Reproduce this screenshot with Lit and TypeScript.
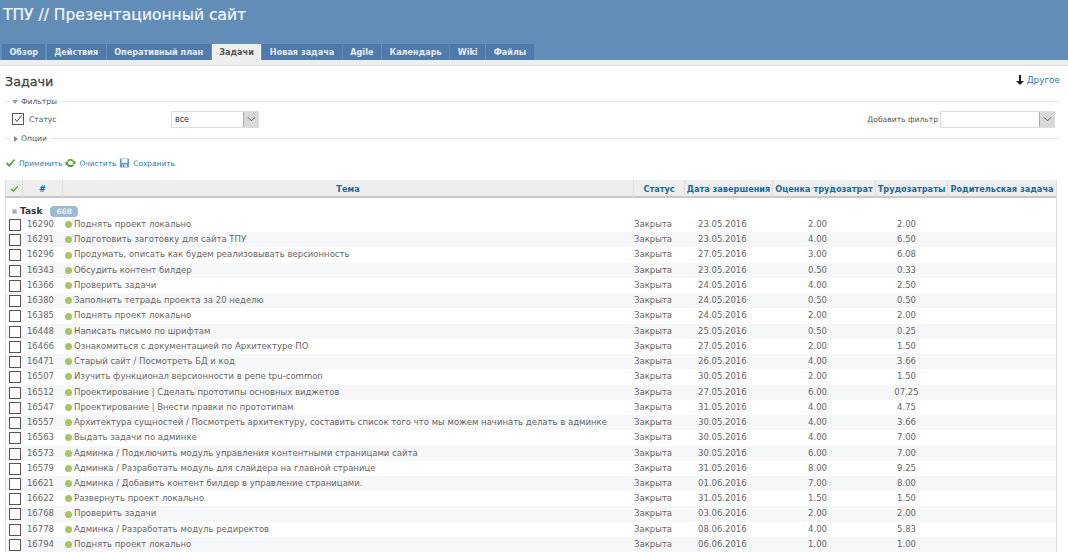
import { LitElement, html, css } from "lit";
import { customElement } from "lit/decorators.js";

const tabs = ["Обзор", "Действия", "Оперативный план", "Задачи", "Новая задача", "Agile", "Календарь", "Wiki", "Файлы"];
const cols = ["Тема", "Статус", "Дата завершения", "Оценка трудозатрат", "Трудозатраты", "Родительская задача"];

const rows: string[][] = [
  ["16290", "Поднять проект локально", "23.05.2016", "2.00", "2.00"],
  ["16291", "Подготовить заготовку для сайта ТПУ", "23.05.2016", "4.00", "6.50"],
  ["16296", "Продумать, описать как будем реализовывать версионность", "27.05.2016", "3.00", "6.08"],
  ["16343", "Обсудить контент билдер", "23.05.2016", "0.50", "0.33"],
  ["16366", "Проверить задачи", "24.05.2016", "4.00", "2.50"],
  ["16380", "Заполнить тетрадь проекта за 20 неделю", "24.05.2016", "0.50", "0.50"],
  ["16385", "Поднять проект локально", "24.05.2016", "2.00", "2.00"],
  ["16448", "Написать письмо по шрифтам", "25.05.2016", "0.50", "0.25"],
  ["16466", "Ознакомиться с документацией по Архитектуре ПО", "27.05.2016", "2.00", "1.50"],
  ["16471", "Старый сайт / Посмотреть БД и код", "26.05.2016", "4.00", "3.66"],
  ["16507", "Изучить функционал версионности в репе tpu-common", "30.05.2016", "2.00", "1.50"],
  ["16512", "Проектирование | Сделать прототипы основных виджетов", "27.05.2016", "6.00", "07.25"],
  ["16547", "Проектирование | Внести правки по прототипам", "31.05.2016", "4.00", "4.75"],
  ["16557", "Архитектура сущностей / Посмотреть архитектуру, составить список того что мы можем начинать делать в админке", "30.05.2016", "4.00", "3.66"],
  ["16563", "Выдать задачи по админке", "30.05.2016", "4.00", "7.00"],
  ["16573", "Админка / Подключить модуль управления контентными страницами сайта", "30.05.2016", "6.00", "7.00"],
  ["16579", "Админка / Разработать модуль для слайдера на главной странице", "31.05.2016", "8.00", "9.25"],
  ["16621", "Админка / Добавить контент билдер в управление страницами.", "01.06.2016", "7.00", "8.00"],
  ["16622", "Развернуть проект локально", "31.05.2016", "1.50", "1.50"],
  ["16768", "Проверить задачи", "03.06.2016", "2.00", "2.00"],
  ["16778", "Админка / Разработать модуль редиректов", "08.06.2016", "4.00", "5.83"],
  ["16794", "Поднять проект локально", "06.06.2016", "1.00", "1.00"],
];

const tick = html`<svg class="ic" viewBox="0 0 14 12"><path d="M1 7l2-2 2.500 2.500L11.500 1 13 2.500 5.500 11z" fill="#5fa83c"/></svg>`;
const refresh = html`<svg class="ic" viewBox="0 0 12 12"><path d="M6 1a5 5 0 0 1 4.600 3L12 3.200V7.400H8L9.300 5.700A3.400 3.400 0 0 0 3.500 4.600L2 3A5 5 0 0 1 6 1z" fill="#6aa83e"/><path d="M6 11A5 5 0 0 1 1.400 8L0 8.800V4.600H4L2.700 6.300A3.400 3.400 0 0 0 8.500 7.400L10 9A5 5 0 0 1 6 11z" fill="#4f9a34"/></svg>`;
const disk = html`<svg class="ic" viewBox="0 0 12 12"><rect x=".5" y=".5" width="11" height="11" rx="1" fill="#6d94c6"/><rect x="2.500" y="1" width="7" height="5" fill="#eef3f9"/><rect x="3" y="7.500" width="6" height="4" fill="#c9d6e6"/><rect x="4" y="8" width="1.500" height="3" fill="#5b82b3"/></svg>`;
const chevron = html`<svg class="chev" viewBox="0 0 10 6"><path d="M1 1l4 4 4-4" fill="none" stroke="#555" stroke-width="1"/></svg>`;

@customElement("app-root")
export class AppRoot extends LitElement {
  static styles = css`
    :host {
      display: block;
      width: 1068px;
      height: 552px;
      overflow: hidden;
      background: #fff;
      font-family: "DejaVu Sans", Verdana, sans-serif;
      font-size: 8.5px;
      color: #555;
    }
    .top {
      height: 60px;
      background: #628db6;
      box-sizing: border-box;
      padding: 0 0 0 2px;
      display: flex;
      flex-direction: column;
      justify-content: space-between;
    }
    h1 {
      margin: 0;
      padding: 4px 0 0 1px;
      font-size: 15.5px;
      font-weight: 400;
      -webkit-text-stroke: 0.2px #f4f7fa;
      line-height: 22px;
      color: #f4f7fa;
    }
    .tabs {
      display: flex;
      gap: 1.25px;
      height: 16px;
    }
    .tab {
      background: #507aaa;
      color: #e6edf5;
      font-weight: 700;
      font-size: 8.15px;
      line-height: 17px;
      padding: 0 7.4px;
    }
    .tab.sel {
      background: #eeeeee;
      color: #555;
    }
    .strip {
      height: 6px;
      background: #eeeeee;
      border-bottom: 1px solid #ddd;
      box-sizing: border-box;
    }
    .main {
      padding: 0 8px 0 5px;
    }
    .head {
      display: flex;
      justify-content: space-between;
      height: 35px;
      box-sizing: border-box;
      padding-top: 7px;
    }
    h2 {
      margin: 0;
      font-size: 12.7px;
      font-weight: 400;
      -webkit-text-stroke: 0.3px #444;
      line-height: 18px;
      color: #444;
    }
    .other {
      display: flex;
      align-items: center;
      gap: 3px;
      height: 14px;
      font-size: 8.9px;
      color: #2a7ab0;
    }
    .legend {
      display: flex;
      align-items: center;
      gap: 3px;
      height: 1px;
      font-size: 7.6px;
      color: #555;
    }
    .legend::before {
      content: "";
      width: 5px;
      height: 1px;
      margin-right: -1px;
      background: #e6e6e6;
    }
    .legend::after {
      content: "";
      flex: 1;
      height: 1px;
      background: #e6e6e6;
    }
    .tri {
      width: 0;
      height: 0;
      border-style: solid;
    }
    .tri.down {
      border-width: 4px 3px 0 3px;
      border-color: #999 transparent transparent;
    }
    .tri.right {
      margin-left: 2px;
      border-width: 3px 0 3px 4px;
      border-color: transparent transparent transparent #888;
    }
    .filter {
      display: flex;
      align-items: center;
      height: 36px;
      padding: 0 0 2px 7px;
      box-sizing: border-box;
      font-size: 7.6px;
    }
    .cb {
      box-sizing: border-box;
      width: 12px;
      height: 12px;
      border: 1px solid #555;
      background: #fff;
      flex: none;
      display: block;
    }
    .cb svg {
      display: block;
      width: 10px;
      height: 10px;
    }
    .status-label {
      margin: 0 0 0 5px;
      width: 142px;
    }
    .select {
      display: flex;
      justify-content: space-between;
      box-sizing: border-box;
      width: 88px;
      height: 17px;
      border: 1px solid #ddd;
      font-size: 8px;
      line-height: 15px;
      padding-left: 3px;
      color: #333;
    }
    .select.add {
      width: 115px;
      margin-left: 2px;
    }
    .arrow {
      width: 14px;
      background: #d9d9d9;
      border-left: 1px solid #aaa;
      display: flex;
      align-items: center;
      justify-content: center;
    }
    .chev {
      width: 9px;
      height: 6px;
    }
    .add-label {
      margin-left: auto;
    }
    .spacer-end {
      width: 5px;
    }
    .actions {
      display: flex;
      align-items: center;
      gap: 3px;
      height: 14px;
      margin-top: 17px;
      color: #2a7ab0;
      font-size: 7.4px;
    }
    .ic {
      width: 11px;
      height: 10px;
      flex: none;
    }
    .grid {
      margin-top: 10px;
      width: 1052px;
      box-sizing: border-box;
      border-right: 1px solid #ddd;
      border-left: 1px solid #ddd;
    }
    .hdr,
    .row {
      display: grid;
      grid-template-columns: 17px 40px 571px 51px 88px 103px 72px 108px;
    }
    .hdr {
      height: 16px;
      background: #eeeeee;
      border-bottom: 2px solid #c8c8c8;
      color: #1a6aa0;
      font-weight: 700;
      font-size: 8.2px;
      line-height: 18px;
      text-align: center;
      white-space: nowrap;
    }
    .hdr > div {
      border-right: 1px solid #dddddd;
    }
    .hdr > div:last-child {
      border-right: 0;
    }
    .hdr .ic {
      width: 9px;
      height: 8px;
      vertical-align: -0.5px;
    }
    .group {
      display: flex;
      align-items: center;
      height: 19px;
      padding: 7px 0 0 6px;
      box-sizing: border-box;
      font-weight: 700;
      font-size: 9px;
      color: #333;
    }
    .square {
      width: 3px;
      height: 3px;
      background: #aaa;
      border: 1px solid #ccc;
      margin-right: 3px;
    }
    .count {
      margin-left: 8px;
      padding: 0 6px;
      height: 11px;
      line-height: 11px;
      border-radius: 4px;
      background: #9db9d8;
      color: #e8eef6;
      font-size: 7.5px;
    }
    .row {
      height: 15.24px;
      line-height: 15.24px;
      white-space: nowrap;
      color: #666;
    }
    .row:nth-child(even) {
      background: #f6f7f8;
    }
    .row .cb {
      margin: 2px 0 0 3px;
    }
    .num {
      text-align: right;
      padding-right: 9px;
    }
    .subject {
      display: flex;
      align-items: center;
      gap: 2px;
    }
    .dot {
      width: 7px;
      height: 7px;
      border-radius: 50%;
      background: #a5c663;
      margin-left: 2px;
      flex: none;
    }
    .date {
      padding-left: 13px;
    }
    .val {
      text-align: center;
      padding-right: 14px;
    }
    .val.spent {
      padding-right: 11px;
    }
  `;

  render() {
    return html`
      <div class="top">
        <h1>ТПУ // Презентационный сайт</h1>
        <div class="tabs">
          ${tabs.map((t) => html`<div class="tab ${t === "Задачи" ? "sel" : ""}">${t}</div>`)}
        </div>
      </div>
      <div class="strip"></div>
      <div class="main">
        <div class="head">
          <h2>Задачи</h2>
          <div class="other">
            <svg width="8" height="10" viewBox="0 0 8 10"><path d="M3 0h2v6h3L4 10 0 6h3z" fill="#222"/></svg>
            Другое
          </div>
        </div>
        <div class="legend"><i class="tri down"></i><span>Фильтры</span></div>
        <div class="filter">
          <span class="cb"><svg viewBox="0 0 10 10"><path d="M2 5l2 2.500L8.500 1.500" fill="none" stroke="#444"/></svg></span>
          <span class="status-label">Статус</span>
          <div class="select">все<span class="arrow">${chevron}</span></div>
          <span class="add-label">Добавить фильтр</span>
          <div class="select add"><span></span><span class="arrow">${chevron}</span></div>
          <span class="spacer-end"></span>
        </div>
        <div class="legend"><i class="tri right"></i><span>Опции</span></div>
        <div class="actions">
          ${tick}<span>Применить</span>${refresh}<span>Очистить</span>${disk}<span>Сохранить</span>
        </div>
        <div class="grid">
          <div class="hdr">
            <div>${tick}</div>
            <div>#</div>
            ${cols.map((c) => html`<div>${c}</div>`)}
          </div>
          <div class="group"><i class="square"></i>Task<span class="count">668</span></div>
          ${rows.map(
            (r) => html`
              <div class="row">
                <div><span class="cb"></span></div>
                <div class="num">${r[0]}</div>
                <div class="subject"><i class="dot"></i>${r[1]}</div>
                <div>Закрыта</div>
                <div class="date">${r[2]}</div>
                <div class="val">${r[3]}</div>
                <div class="val spent">${r[4]}</div>
                <div></div>
              </div>
            `
          )}
        </div>
      </div>
    `;
  }
}
